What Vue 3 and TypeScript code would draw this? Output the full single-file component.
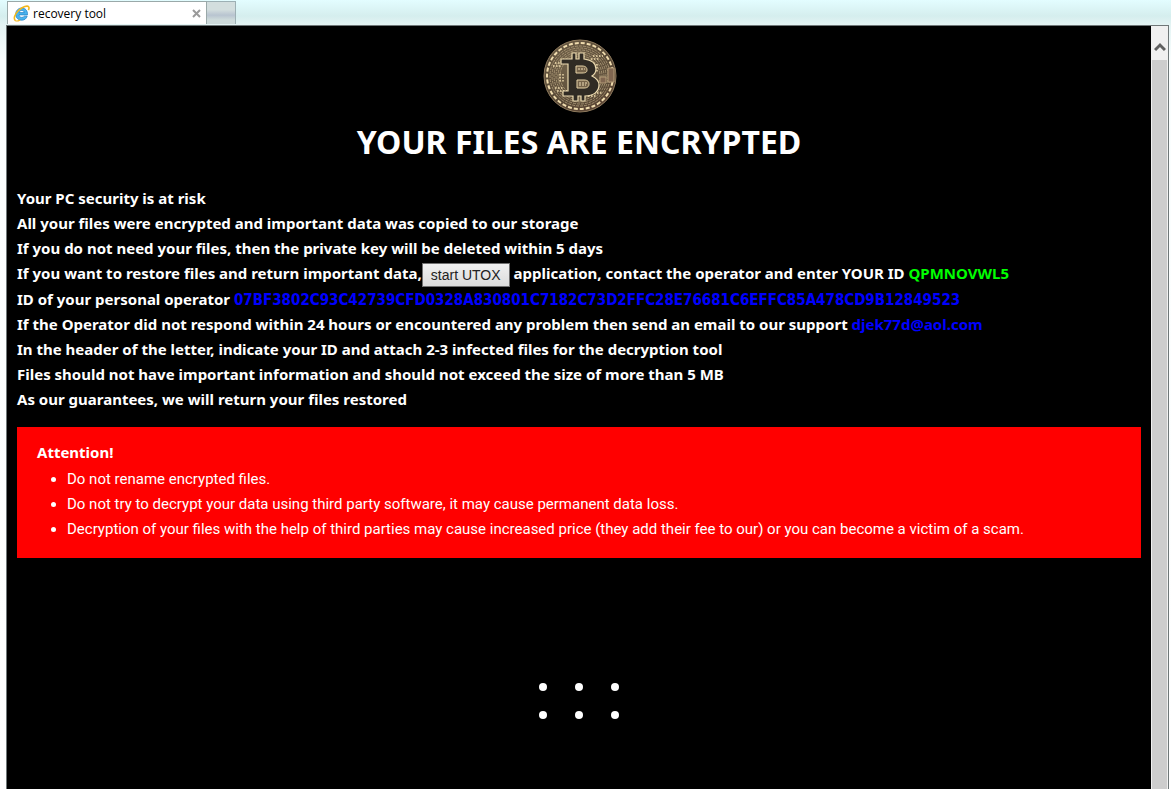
<script setup lang="ts">
const tabTitle = 'recovery tool'
const personalId = 'QPMNOVWL5'
const operatorId = '07BF3802C93C42739CFD0328A830801C7182C73D2FFC28E76681C6EFFC85A478CD9B12849523'
const supportAddress = 'djek77d@aol.com'
const warnings: string[] = [
  'Do not rename encrypted files.',
  'Do not try to decrypt your data using third party software, it may cause permanent data loss.',
  'Decryption of your files with the help of third parties may cause increased price (they add their fee to our) or you can become a victim of a scam.',
]
</script>

<template>
  <div class="window">
    <header class="tabs">
      <div class="tab">
        <svg class="tab-icon" width="17" height="17" viewBox="0 0 17 17" aria-hidden="true">
          <path d="M14.500 9.900H6c.2 1.700 1.300 2.500 2.800 2.500 1.100 0 1.900-.4 2.400-1.200h3c-.8 2.600-2.900 4-5.500 4-3.500 0-6-2.500-6-6s2.600-6.200 6.100-6.200 6 2.600 5.700 6.900zM6.100 7.600h5.200c-.2-1.400-1.200-2.100-2.600-2.100s-2.400.8-2.600 2.100z" fill="#4ab4ee" stroke="#1f7cc4" stroke-width=".7" />
          <path d="M2.700 15.800C0 14.200 1.600 9.300 5.500 5.500 9.800 1.600 14.500.2 15.700 1.900c.5.8.3 2-.3 3.200" fill="none" stroke="#f3b81c" stroke-width="1.600" />
          <path d="M2.700 15.800c1.100.5 2.800 0 4.400-.9" fill="none" stroke="#f3b81c" stroke-width="1.200" />
        </svg>
        <span class="tab-title">{{ tabTitle }}</span>
        <button class="tab-close" type="button" aria-label="Close tab">
          <svg width="9" height="9" viewBox="0 0 9 9"><path d="M1 1l7 7M8 1L1 8" stroke="#9a9a9a" stroke-width="2" /></svg>
        </button>
      </div>
      <button class="new-tab" type="button" aria-label="New tab"></button>
    </header>

    <div class="viewport">
      <main class="page">
        <svg class="coin" width="76" height="74" viewBox="0 0 76 74" role="img" aria-label="Bitcoin">
          <defs>
            <radialGradient id="coin-face" cx=".4" cy=".35" r=".75">
              <stop offset="0" stop-color="#75664d" />
              <stop offset=".7" stop-color="#584936" />
              <stop offset="1" stop-color="#604434" />
            </radialGradient>
          </defs>
          <circle cx="39" cy="37" r="36" fill="url(#coin-face)" stroke="#8f7b5e" stroke-width="1" />
          <circle cx="39" cy="37" r="33" fill="none" stroke="#f0dcae" stroke-width="2" stroke-dasharray="4 2" />
          <g fill="none" stroke="#b5a17d" stroke-width=".8" stroke-dasharray="3 1">
            <circle cx="39" cy="37" r="30" />
            <circle cx="39" cy="37" r="28" />
            <circle cx="39" cy="37" r="26" />
            <circle cx="39" cy="37" r="24" />
            <circle cx="39" cy="37" r="22" />
            <circle cx="39" cy="37" r="20" />
          </g>
          <g fill="none" stroke="#f0dcae" stroke-width="1.400" stroke-dasharray="1.500 1.500">
            <path d="M14 24h9M12 27h9M52 17h10M50 20h9M14 49h9M16 52h10M50 54h11M47 57h8M19 35v9M22 35v9M56 25v9M53 27v9" />
          </g>
          <path d="M67 29h6v14h-6zM59 38h6v6h-6z" fill="#806650" stroke="#b59d78" />
          <path d="M20 20h11v-6h4v6h3v-6h5v6c8 1 12 5 12 10 0 3-1 5-4 7 4 2 7 5 7 9 0 7-6 11-14 11v5h-4v-5h-3v5h-5v-5H22v-5h5V25h-7z" fill="#302b24" stroke="#ecdaaf" stroke-width="1.200" />
          <path d="M35 27h6c4 0 5 2 5 4s-1 3-5 3h-6zM36 41h7c4 0 5 2 5 4s-1 4-5 4h-7z" fill="#75634a" stroke="#e8d4a7" />
          <path d="M37 30h7M38 44h8M38 46h7" stroke="#f1dfb7" stroke-dasharray="2 1" />
        </svg>
        <h1>YOUR FILES ARE ENCRYPTED</h1>

        <div class="note">
          <p>Your PC security is at risk</p>
          <p>All your files were encrypted and important data was copied to our storage</p>
          <p>If you do not need your files, then the private key will be deleted within 5 days</p>
          <p>If you want to restore files and return important data,<button class="start" type="button">start UTOX</button> application, contact the operator and enter YOUR ID <span class="id">{{ personalId }}</span></p>
          <p>ID of your personal operator <span class="blue operator">{{ operatorId }}</span></p>
          <p>If the Operator did not respond within 24 hours or encountered any problem then send an email to our support <span class="blue">{{ supportAddress }}</span></p>
          <p>In the header of the letter, indicate your ID and attach 2-3 infected files for the decryption tool</p>
          <p>Files should not have important information and should not exceed the size of more than 5 MB</p>
          <p>As our guarantees, we will return your files restored</p>
        </div>

        <section class="attention">
          <h2>Attention!</h2>
          <ul>
            <li v-for="warning in warnings" :key="warning">{{ warning }}</li>
          </ul>
        </section>

        <div class="dots" aria-hidden="true">
          <i v-for="n in 6" :key="n"></i>
        </div>
      </main>

      <div class="scrollbar" aria-hidden="true">
        <div class="scroll-up">
          <svg width="12" height="10" viewBox="0 0 12 10"><path d="M1 8l5-5 5 5" fill="none" stroke="#606060" stroke-width="3" /></svg>
        </div>
        <div class="thumb"></div>
      </div>
    </div>
  </div>
</template>

<style>
html,
body {
  background: #f5fbfb;
}
</style>

<style scoped>
.window {
  box-sizing: border-box;
  display: flex;
  flex-direction: column;
  height: 100vh;
  padding: 0 2px 0 6px;
  overflow: hidden;
  background: linear-gradient(#e3fdff 0, #d5eeee 16px, #e4f4f4 25px, #fafefe 60px, #fff 100%);
  font-family: "Noto Sans", Tahoma, sans-serif;
}
.tabs {
  display: flex;
  flex: none;
  height: 24px;
  padding: 1px 0 0 1px;
  box-sizing: border-box;
  margin-bottom: 1px;
}
.tab {
  box-sizing: border-box;
  display: flex;
  align-items: center;
  width: 200px;
  padding: 0 5px;
  background: #fff;
  border: 1px solid #9aa9a9;
  border-bottom: 0;
}
.tab-title {
  flex: 1;
  padding: 2px 0 0 3px;
  font-family: "Open Sans", sans-serif;
  font-size: 12px;
  line-height: 16px;
  color: #000;
}
.tab-close {
  display: flex;
  padding: 0;
  border: 0;
  background: none;
}
.new-tab {
  width: 29px;
  padding: 0;
  border: 1px solid #9db0b4;
  border-width: 1px 1px 0 0;
  background: linear-gradient(#d3dede 35%, #b8c4d0 60%, #cddada 80%);
}
.viewport {
  display: flex;
  flex: 1;
  min-height: 0;
  border: 1px solid #6f7778;
  border-bottom: 0;
}
.page {
  flex: 1;
  min-width: 0;
  overflow: hidden;
  padding: 13px 10px 0;
  background: #000;
  color: #fff;
  font-size: 15px;
  line-height: 25px;
}
.coin {
  display: block;
  margin: 0 auto;
}
h1 {
  margin: 9px 0 24px;
  font-size: 32px;
  line-height: 40px;
  text-align: center;
}
.note {
  font-weight: bold;
}
p {
  margin: 0;
  white-space: nowrap;
}
.start {
  height: 24px;
  width: 88px;
  padding: 0;
  border: 1px solid #707070;
  background: linear-gradient(#f0f0f0, #dcdcdc);
  color: #222;
  font-family: "Liberation Sans", Arial, sans-serif;
  font-size: 14px;
  line-height: 20px;
  vertical-align: middle;
}
.id {
  color: #0f0;
}
.blue {
  color: #00f;
}
.operator {
  font-family: "DejaVu Sans Condensed", Tahoma, sans-serif;
  line-height: 20px;
}
.attention {
  margin-top: 15px;
  padding: 13px 20px 16px;
  background: #f00;
}
h2 {
  margin: 0 0 2px;
  font-size: 15px;
  line-height: 25px;
}
ul {
  margin: 0;
  padding-left: 30px;
  font-family: Roboto, Tahoma, sans-serif;
}
.dots {
  display: grid;
  grid-template-columns: repeat(3, 8px);
  gap: 20px 28px;
  justify-content: center;
  margin-top: 125px;
}
.dots i {
  height: 8px;
  border-radius: 50%;
  background: #fff;
}
.scrollbar {
  display: flex;
  flex-direction: column;
  flex: none;
  width: 17px;
  background: #f0f0f0;
}
.scroll-up {
  display: flex;
  align-items: flex-end;
  justify-content: center;
  flex: none;
  height: 26px;
  padding-bottom: 8px;
}
.thumb {
  flex: 1;
  margin: 0 1px;
  background: #cdcdcd;
}
</style>
